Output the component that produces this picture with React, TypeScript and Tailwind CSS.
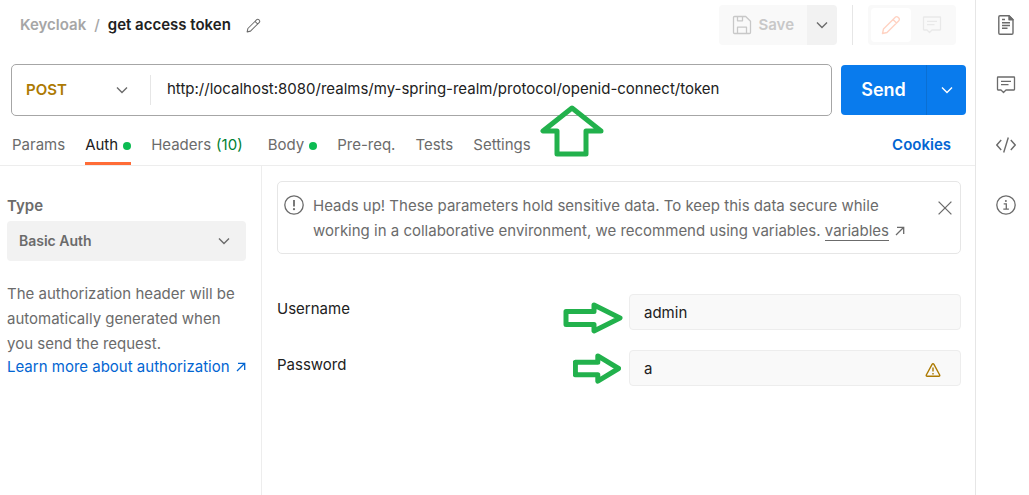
import React from "react";
import clsx from "clsx";

interface IconProps {
  className?: string;
}

interface TabProps {
  label: string;
  count?: number;
  dot?: boolean;
}

interface CredentialFieldProps {
  id: string;
  label: string;
  value: string;
  onChange: (value: string) => void;
  children?: React.ReactNode;
}

const tabs: TabProps[] = [
  { label: "Params" },
  { label: "Auth", dot: true },
  { label: "Headers", count: 10 },
  { label: "Body", dot: true },
  { label: "Pre-req." },
  { label: "Tests" },
  { label: "Settings" },
];

const ChevronIcon = ({ className }: IconProps) => (
  <svg
    viewBox="0 0 12 12"
    fill="none"
    stroke="currentColor"
    strokeWidth="1.4"
    className={clsx("h-3 w-3 shrink-0", className)}
  >
    <path d="M1 3.5 6 8.5 11 3.5" />
  </svg>
);

const PencilIcon = ({ className }: IconProps) => (
  <svg
    viewBox="0 0 20 20"
    fill="none"
    stroke="currentColor"
    strokeWidth="1.4"
    strokeLinejoin="round"
    className={className}
  >
    <path d="M1.5 18.5 2.5 14 14.3 2.2a1.9 1.9 0 0 1 2.7 0l.8.8a1.9 1.9 0 0 1 0 2.7L6 17.5ZM12 4.5 15.5 8" />
  </svg>
);

const SaveIcon = () => (
  <svg
    viewBox="0 0 20 20"
    fill="none"
    stroke="currentColor"
    strokeWidth="1.3"
    strokeLinejoin="round"
    className="h-5 w-5"
  >
    <path d="M1.5 2.5a1 1 0 0 1 1-1h11.2l4.8 4.8v11.2a1 1 0 0 1-1 1h-15a1 1 0 0 1-1-1Z" />
    <path d="M5.5 1.5v4.3h5V1.5M5.5 18.5v-6.3h9v6.3" />
  </svg>
);

const CommentIcon = () => (
  <svg
    viewBox="0 0 20 20"
    fill="none"
    stroke="currentColor"
    strokeWidth="1.3"
    strokeLinejoin="round"
    className="h-5 w-5"
  >
    <path d="M2 2h16a.5.5 0 0 1 .5.5v12a.5.5 0 0 1-.5.5H10l-2.5 2.5L5 15H2a.5.5 0 0 1-.5-.5v-12A.5.5 0 0 1 2 2Z" />
    <path d="M5 6.3h10M5 9.7h7.5" />
  </svg>
);

const DocumentIcon = () => (
  <svg
    viewBox="0 0 20 20"
    fill="none"
    stroke="currentColor"
    strokeWidth="1.4"
    strokeLinejoin="round"
    className="h-5 w-5"
  >
    <path d="M4 .8h9l4 4v13.2a1.2 1.2 0 0 1-1.2 1.2H4A1.2 1.2 0 0 1 2.8 18V2A1.200 1.200 0 0 1 4 .8Z" />
    <path d="M13 .8v4h4Z" fill="currentColor" />
    <path d="M6 4.5h3M6 7.7h8M6 10.500h8M6 13.300h5.500" />
  </svg>
);

const CodeIcon = () => (
  <svg
    viewBox="0 0 20 20"
    fill="none"
    stroke="currentColor"
    strokeWidth="1.4"
    className="h-5 w-5"
  >
    <path d="M5.2 5 .8 10l4.4 5M14.8 5l4.4 5-4.4 5M12.3 2.5 7.7 17.5" />
  </svg>
);

const InfoIcon = () => (
  <svg
    viewBox="0 0 20 20"
    fill="none"
    stroke="currentColor"
    strokeWidth="1.3"
    className="h-5 w-5"
  >
    <circle cx="10" cy="10" r="9.2" />
    <path d="M7.7 8.8h2.6V14M7.3 14.2h5.6" />
    <circle cx="9.9" cy="6" r="1" fill="currentColor" stroke="none" />
  </svg>
);

const AlertIcon = () => (
  <svg
    viewBox="0 0 20 20"
    fill="none"
    stroke="currentColor"
    strokeWidth="1.3"
    className="h-5 w-5 shrink-0"
  >
    <circle cx="10" cy="10" r="9.2" />
    <path d="M10 5v6.5" strokeWidth="1.8" />
    <circle cx="10" cy="14.2" r="1.1" fill="currentColor" stroke="none" />
  </svg>
);

const CloseIcon = () => (
  <svg
    viewBox="0 0 14 14"
    fill="none"
    stroke="currentColor"
    strokeWidth="1.3"
    className="h-3.5 w-3.5"
  >
    <path d="M.6.6l12.8 12.8M13.4.6.6 13.4" />
  </svg>
);

const ExternalIcon = () => (
  <svg
    viewBox="0 0 10 10"
    fill="none"
    stroke="currentColor"
    strokeWidth="1.3"
    className="ml-1.5 inline-block h-2.5 w-2.5 align-baseline"
  >
    <path d="M1 9 8.5 1.5M2 1.3h6.7V8" />
  </svg>
);

const WarningIcon = () => (
  <svg
    viewBox="0 0 16 16"
    fill="none"
    stroke="currentColor"
    strokeWidth="1.4"
    strokeLinejoin="round"
    className="h-4 w-4"
  >
    <path d="M7.2 2.2 1.3 13a.9.9 0 0 0 .8 1.3h11.8a.9.9 0 0 0 .8-1.3L8.8 2.2a.9.9 0 0 0-1.6 0Z" />
    <path d="M8 5.5v4M8 10.9v1.5" />
  </svg>
);

// Hand-drawn style pointers that sit on top of the form
const ArrowUp = ({ className }: IconProps) => (
  <svg
    viewBox="0 0 64 52"
    fill="none"
    stroke="#22b14c"
    strokeWidth="5"
    strokeLinejoin="round"
    className={className}
  >
    <path d="M32 3 3 26h14v23h29V26h15Z" />
  </svg>
);

const ArrowRight = ({ className }: IconProps) => (
  <svg
    viewBox="0 0 60 32"
    preserveAspectRatio="none"
    fill="none"
    stroke="#22b14c"
    strokeWidth="5"
    strokeLinejoin="round"
    className={className}
  >
    <path d="M3 9.5h28V3L57 16 31 29v-6.5H3Z" vectorEffect="non-scaling-stroke" />
  </svg>
);

const Tab = ({
  tab,
  active,
  onClick,
}: {
  tab: TabProps;
  active: boolean;
  onClick: () => void;
}) => (
  <button
    type="button"
    role="tab"
    aria-selected={active}
    onClick={onClick}
    className={clsx(
      "flex items-center border-b-3 pt-1 whitespace-nowrap",
      active
        ? "border-[#ff6c37] text-[#212121]"
        : "border-transparent text-[#6b6b6b]"
    )}
  >
    {tab.label}
    {tab.count && (
      <span className="mr-[5px] ml-[5px] text-[#007f31]">({tab.count})</span>
    )}
    {tab.dot && (
      <span className="ml-[5px] h-2 w-2 rounded-full bg-[#0cbb52]" />
    )}
  </button>
);

const CredentialField = ({
  id,
  label,
  value,
  onChange,
  children,
}: CredentialFieldProps) => (
  <div className="flex justify-between">
    <label htmlFor={id} className="pt-[3px] leading-6">
      {label}
    </label>
    <div className="relative w-[332px]">
      <input
        id={id}
        type="text"
        autoComplete="off"
        value={value}
        onChange={(e) => onChange(e.target.value)}
        className="h-9 w-full rounded border border-[#ededed] bg-[#f9f9f9] px-3.5 outline-none"
      />
      {children}
    </div>
  </div>
);

const App = () => {
  const [activeTab, setActiveTab] = React.useState<string>("Auth");
  const [url, setUrl] = React.useState<string>(
    "http://localhost:8080/realms/my-spring-realm/protocol/openid-connect/token"
  );
  const [username, setUsername] = React.useState<string>("admin");
  const [password, setPassword] = React.useState<string>("a");
  const [showNotice, setShowNotice] = React.useState<boolean>(true);

  return (
    <div className="flex min-h-screen bg-white font-['Inter',sans-serif] text-[15px] text-[#212121]">
      <main className="flex min-w-0 flex-1 flex-col">
        <header className="flex items-start justify-between pt-[5px] pr-[19px] pl-5">
          <div className="flex h-10 items-center font-semibold">
            <a href="#keycloak" className="text-[#a6a6a6]">
              Keycloak
            </a>
            <span className="mx-2 font-medium text-[#a6a6a6]">/</span>
            <h1>get access token</h1>
            <button type="button" aria-label="Rename" className="ml-[15px] text-[#6b6b6b]">
              <PencilIcon className="h-[15px] w-[15px]" />
            </button>
          </div>
          <div className="flex h-10">
            <button
              type="button"
              disabled
              className="flex items-center gap-1.5 rounded-l bg-[#f9f9f9] px-[13px] font-semibold text-[#c8c8c8]"
            >
              <SaveIcon />
              Save
            </button>
            <button
              type="button"
              aria-label="Save options"
              className="flex w-[30px] items-center justify-center rounded-r bg-[#f2f2f2] text-[#6b6b6b]"
            >
              <ChevronIcon />
            </button>
            <div className="mx-[15px] w-px bg-[#e6e6e6]" />
            <div className="flex rounded bg-[#f9f9f9] p-[3px]">
              <button
                type="button"
                aria-label="Edit"
                className="flex w-10 items-center justify-center rounded bg-white text-[#ffd3c3]"
              >
                <PencilIcon className="h-5 w-5" />
              </button>
              <button
                type="button"
                aria-label="Comments"
                className="flex w-[42px] items-center justify-center text-[#e9e9e9]"
              >
                <CommentIcon />
              </button>
            </div>
          </div>
        </header>

        <form
          onSubmit={(e) => e.preventDefault()}
          className="relative mt-[19px] flex items-center gap-[9px] pr-[9px] pl-[11px]"
        >
          <div className="flex h-[52px] min-w-0 flex-1 items-center rounded-[5px] border border-[#a6a6a6]">
            <div className="relative flex w-[138px] items-center">
              <select
                aria-label="Method"
                defaultValue="POST"
                className="w-full appearance-none bg-transparent pl-3.5 font-semibold text-[#ad7a03] outline-none"
              >
                <option>GET</option>
                <option>POST</option>
                <option>PUT</option>
                <option>DELETE</option>
              </select>
              <ChevronIcon className="pointer-events-none absolute right-[22px] text-[#6b6b6b]" />
            </div>
            <div className="h-[30px] w-px bg-[#e6e6e6]" />
            <input
              type="text"
              aria-label="Request URL"
              value={url}
              onChange={(e) => setUrl(e.target.value)}
              className="h-full min-w-0 flex-1 bg-transparent pr-4 pb-1 pl-4 outline-none"
            />
          </div>
          <div className="flex h-[50px] text-white">
            <button
              type="submit"
              className="w-[85px] rounded-l bg-[#097bed] text-lg font-semibold"
            >
              Send
            </button>
            <button
              type="button"
              aria-label="Send options"
              className="flex w-10 items-center justify-center rounded-r border-l border-[#0a6fd3] bg-[#097bed]"
            >
              <ChevronIcon />
            </button>
          </div>
          <ArrowUp className="pointer-events-none absolute top-[41px] left-[540px] h-[52px] w-16" />
        </form>

        <div className="mt-[9px] flex items-stretch justify-between border-b border-[#ededed] pr-6 pl-3">
          <div role="tablist" className="flex h-10 gap-5">
            {tabs.map((tab) => (
              <Tab
                key={tab.label}
                tab={tab}
                active={tab.label === activeTab}
                onClick={() => setActiveTab(tab.label)}
              />
            ))}
          </div>
          <a
            href="#cookies"
            className="self-center font-semibold text-[#0265d2]"
          >
            Cookies
          </a>
        </div>

        <div className="flex flex-1">
          <section className="w-[262px] shrink-0 border-r border-[#ededed] pt-7 pl-[7px] text-[#6b6b6b]">
            <label htmlFor="auth-type" className="block leading-6 font-semibold">
              Type
            </label>
            <div className="relative mt-[3px] mr-[15px] flex items-center">
              <select
                id="auth-type"
                defaultValue="Basic Auth"
                className="h-10 w-full appearance-none rounded bg-[#f2f2f2] px-3 text-sm font-semibold outline-none"
              >
                <option>No Auth</option>
                <option>Basic Auth</option>
                <option>Bearer Token</option>
                <option>OAuth 2.0</option>
              </select>
              <ChevronIcon className="pointer-events-none absolute right-4" />
            </div>
            <p className="mt-5 pr-6 leading-[25px]">
              The authorization header will be automatically generated when you
              send the request.
            </p>
            <a
              href="#authorization"
              className="block leading-[22px] whitespace-nowrap text-[#0265d2]"
            >
              Learn more about authorization
              <ExternalIcon />
            </a>
          </section>

          <section className="min-w-0 flex-1 pt-[15px] pr-3.5 pl-[15px]">
            {showNotice && (
              <div className="flex items-start rounded-[5px] border border-[#e6e6e6] pt-[11px] pr-2 pb-2.5 pl-1.5 text-[#6b6b6b]">
                <div className="pt-0.5">
                  <AlertIcon />
                </div>
                <p className="flex-1 pr-5 pl-[9px] leading-[25px]">
                  Heads up! These parameters hold sensitive data. To keep this
                  data secure while
                  <br />
                  working in a collaborative environment, we recommend using
                  variables.{" "}
                  <a href="#variables" className="whitespace-nowrap">
                    <span className="border-b border-current">variables</span>
                    <ExternalIcon />
                  </a>
                </p>
                <button
                  type="button"
                  aria-label="Dismiss"
                  onClick={() => setShowNotice(false)}
                  className="pt-2"
                >
                  <CloseIcon />
                </button>
              </div>
            )}
            <div className="mt-10 flex flex-col gap-5">
              <CredentialField
                id="username"
                label="Username"
                value={username}
                onChange={setUsername}
              >
                <ArrowRight className="pointer-events-none absolute top-2 right-[338px] h-8 w-[60px]" />
              </CredentialField>
              <CredentialField
                id="password"
                label="Password"
                value={password}
                onChange={setPassword}
              >
                <ArrowRight className="pointer-events-none absolute top-[3px] right-[340px] h-[31px] w-12" />
                <span className="absolute top-3 right-5 text-[#ad7a03]">
                  <WarningIcon />
                </span>
              </CredentialField>
            </div>
          </section>
        </div>
      </main>

      <aside className="flex w-[54px] shrink-0 flex-col items-center gap-10 border-l border-[#e6e6e6] pt-[15px] pl-1.5 text-[#6b6b6b]">
        <button type="button" aria-label="Documentation">
          <DocumentIcon />
        </button>
        <button type="button" aria-label="Comments">
          <CommentIcon />
        </button>
        <button type="button" aria-label="Code">
          <CodeIcon />
        </button>
        <button type="button" aria-label="Info">
          <InfoIcon />
        </button>
      </aside>
    </div>
  );
};

export default App;
